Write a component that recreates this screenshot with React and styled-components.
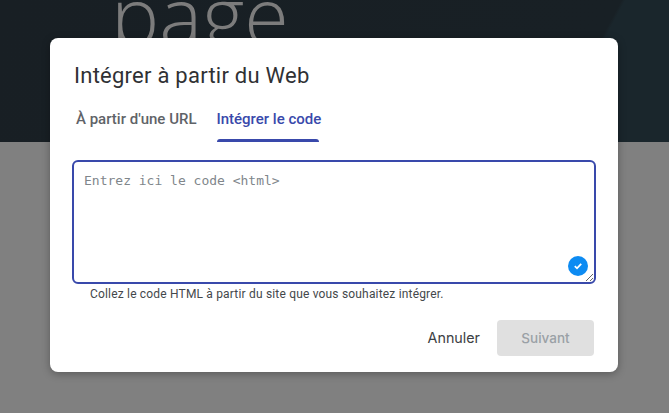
import React from "react";
import styled, { createGlobalStyle } from "styled-components";

const Global = createGlobalStyle`
    html, body {
        margin: 0;
        padding: 0;
        height: 100%;
        overflow: hidden;
        font-family: Roboto, "Liberation Sans", sans-serif;
    }
`;

const Page = styled.div`
    position: relative;
    width: 669px;
    height: 413px;
    background: #808080;
    overflow: hidden;
`;

const Hero = styled.header`
    height: 142px;
    padding-left: 111px;
    box-sizing: border-box;
    overflow: hidden;
    background: linear-gradient(118deg, #181f24 0, #182025 83.5%, #1a262c 84%, #1a262c 100%);
`;

const HeroTitle = styled.h1`
    margin: -30px 0 0;
    font-family: "Open Sans", sans-serif;
    font-weight: 300;
    font-size: 81px;
    line-height: 90px;
    color: #7c7c7c;
`;

const Dialog = styled.section`
    position: absolute;
    left: 50px;
    top: 38px;
    width: 568px;
    height: 334px;
    box-sizing: border-box;
    padding: 24px 22px 0 22px;
    background: #fff;
    border-radius: 8px;
    box-shadow: 0 2px 8px rgba(0, 0, 0, 0.3);
    display: flex;
    flex-direction: column;
`;

const Title = styled.h2`
    margin: 0 0 0 2px;
    font-size: 22px;
    font-weight: 400;
    line-height: 28px;
    letter-spacing: 0.25px;
    color: #303134;
`;

const Tabs = styled.div`
    display: flex;
    gap: 20px;
    margin: 13px 0 18px 4px;
`;

const Tab = styled.div`
    position: relative;
    height: 39px;
    font-size: 15px;
    font-weight: 500;
    line-height: 20px;
    box-sizing: border-box;
    padding-top: 6px;
    color: ${props => (props.active ? "#3949ab" : "#5f6368")};
    ${props =>
        props.active &&
        `&::after {
            content: "";
            position: absolute;
            left: 1px;
            right: 2px;
            bottom: 0;
            height: 3px;
            background: #3949ab;
            border-radius: 3px 3px 0 0;
        }`}
`;

const Field = styled.div`
    position: relative;
    width: 524px;
    height: 124px;
`;

const CodeInput = styled.textarea`
    display: block;
    width: 100%;
    height: 100%;
    min-height: 60px;
    box-sizing: border-box;
    margin: 0;
    padding: 10px;
    border: 2px solid #3949ab;
    border-radius: 6px;
    outline: none;
    resize: vertical;
    font-family: "DejaVu Sans Mono", monospace;
    font-size: 13px;
    line-height: 17px;
    &::placeholder {
        color: #80868b;
        opacity: 1;
    }
`;

const CheckBadge = styled.span`
    position: absolute;
    right: 8px;
    bottom: 8px;
    width: 20px;
    height: 20px;
    border-radius: 50%;
    background: #0d8bf2;
    display: flex;
    align-items: center;
    justify-content: center;
`;

const Hint = styled.p`
    margin: 3px 0 0 18px;
    font-size: 12px;
    line-height: 15px;
    letter-spacing: 0.18px;
    color: #44484b;
`;

const Actions = styled.div`
    display: flex;
    justify-content: flex-end;
    align-items: center;
    gap: 17px;
    margin: 18px 2px 0 0;
`;

const CancelButton = styled.button`
    padding: 0 0 2px;
    border: 0;
    background: none;
    font-family: Inter, sans-serif;
    font-size: 14.3px;
    color: #3c4043;
`;

const NextButton = styled.button`
    width: 97px;
    height: 36px;
    border: 0;
    border-radius: 4px;
    background: #e0e0e0;
    font-family: Inter, sans-serif;
    font-size: 13.5px;
    font-weight: 500;
    color: #9aa0a6;
`;

export default function App() {
    return (
        <Page>
            <Global />
            <Hero>
                <HeroTitle>page</HeroTitle>
            </Hero>
            <Dialog>
                <Title>Intégrer à partir du Web</Title>
                <Tabs>
                    <Tab>À partir d'une URL</Tab>
                    <Tab active>Intégrer le code</Tab>
                </Tabs>
                <Field>
                    <CodeInput placeholder="Entrez ici le code <html>" />
                    <CheckBadge>
                        <svg width="12" height="12" viewBox="0 0 12 12" fill="none">
                            <path d="M2.8 6.2 5 8.3 9.2 3.8" stroke="#fff" strokeWidth="1.8" />
                        </svg>
                    </CheckBadge>
                </Field>
                <Hint>Collez le code HTML à partir du site que vous souhaitez intégrer.</Hint>
                <Actions>
                    <CancelButton>Annuler</CancelButton>
                    <NextButton disabled>Suivant</NextButton>
                </Actions>
            </Dialog>
        </Page>
    );
}
